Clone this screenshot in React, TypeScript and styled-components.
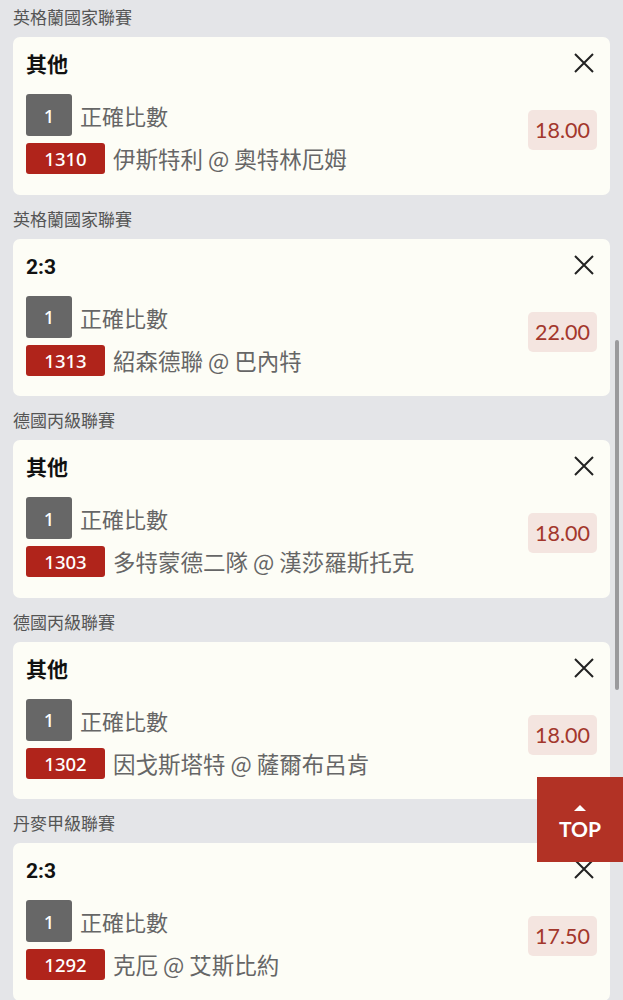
import React from "react";
import styled, { createGlobalStyle } from "styled-components";

const Global = createGlobalStyle`
  html, body { margin: 0; padding: 0; background: #e4e5e8; }
  body { font-family: "Noto Sans CJK TC", "Noto Sans", sans-serif; overflow: hidden; }
`;

const Page = styled.div`
  height: 1000px;
  overflow: hidden;
  position: relative;
  padding: 0 13px;
  box-sizing: border-box;
`;

const Section = styled.section`
  display: flex;
  flex-direction: column;
`;

const League = styled.div<{ $first?: boolean }>`
  padding-top: ${(p) => (p.$first ? 5 : 12)}px;
  margin-bottom: 8px;
  height: 24px;
  line-height: 24px;
  font-size: 17px;
  color: #555;
`;

const Card = styled.div`
  background: #fdfdf6;
  border-radius: 7px;
  display: flex;
  justify-content: space-between;
  padding: 14px 13px 20.5px 13px;
`;

const Left = styled.div`
  display: flex;
  flex-direction: column;
`;

const Title = styled.div`
  height: 28px;
  line-height: 28px;
  font-size: 21px;
  font-weight: 700;
  color: #111;
  margin-bottom: 15px;
  font-family: Roboto, "Noto Sans CJK TC", sans-serif;
`;

const Row = styled.div<{ $gap?: number }>`
  display: flex;
  align-items: center;
  gap: 8px;
  margin-top: ${(p) => p.$gap ?? 0}px;
`;

const Badge = styled.div<{ $variant: "grey" | "red" }>`
  display: flex;
  align-items: center;
  justify-content: center;
  color: #fff;
  border-radius: 3px;
  font-family: "Noto Sans", Roboto, sans-serif;
  background: ${(p) => (p.$variant === "grey" ? "#676767" : "#b0241b")};
  width: ${(p) => (p.$variant === "grey" ? 46 : 79)}px;
  height: ${(p) => (p.$variant === "grey" ? 42 : 31)}px;
  font-size: 18.5px;
  font-weight: 500;
`;

const Market = styled.span`
  font-size: 22px;
  color: #666;
  line-height: 1;
`;

const Match = styled.span`
  font-size: 22.5px;
  color: #666;
  line-height: 1;
`;

const Right = styled.div`
  display: flex;
  flex-direction: column;
  align-items: flex-end;
`;

const Close = styled.button`
  border: none;
  background: none;
  padding: 0;
  width: 24px;
  height: 24px;
  margin-right: 1px;
  display: flex;
  align-items: center;
  justify-content: center;
  cursor: pointer;
`;

const Price = styled.div`
  margin-top: 35px;
  width: 69px;
  height: 40px;
  border-radius: 5px;
  background: #f4e5e0;
  color: #a3372c;
  font-family: Lato, "Open Sans", sans-serif;
  font-size: 21.5px;
  display: flex;
  align-items: center;
  justify-content: center;
`;

const Scrollbar = styled.div`
  position: absolute;
  right: 4px;
  top: 340px;
  width: 4px;
  height: 350px;
  border-radius: 2px;
  background: #9a9a9c;
`;

const TopButton = styled.button`
  position: absolute;
  right: 0;
  top: 777px;
  width: 86px;
  height: 85px;
  border: none;
  background: #b23225;
  color: #fff;
  display: flex;
  flex-direction: column;
  align-items: center;
  justify-content: center;
  padding: 6px 0 0 0;
  font-family: Lato, "Open Sans", sans-serif;
  font-weight: 700;
  font-size: 21px;
  line-height: 24px;
`;

const Arrow = styled.span`
  width: 0;
  height: 0;
  border-left: 6px solid transparent;
  border-right: 6px solid transparent;
  border-bottom: 6px solid #fff;
  margin-bottom: 6px;
`;

const CloseIcon = () => (
  <svg width="22" height="22" viewBox="0 0 22 22">
    <path d="M2 2 L20 20 M20 2 L2 20" stroke="#222" strokeWidth="2" fill="none" />
  </svg>
);

const bets = [
  { league: "英格蘭國家聯賽", title: "其他", no: "1310", match: "伊斯特利 @ 奧特林厄姆", odds: "18.00" },
  { league: "英格蘭國家聯賽", title: "2:3", no: "1313", match: "紹森德聯 @ 巴內特", odds: "22.00" },
  { league: "德國丙級聯賽", title: "其他", no: "1303", match: "多特蒙德二隊 @ 漢莎羅斯托克", odds: "18.00" },
  { league: "德國丙級聯賽", title: "其他", no: "1302", match: "因戈斯塔特 @ 薩爾布呂肯", odds: "18.00" },
  { league: "丹麥甲級聯賽", title: "2:3", no: "1292", match: "克厄 @ 艾斯比約", odds: "17.50" },
];

export default function App() {
  return (
    <>
      <Global />
      <Page>
        {bets.map((b, i) => (
          <Section key={i}>
            <League $first={i === 0}>{b.league}</League>
            <Card>
              <Left>
                <Title>{b.title}</Title>
                <Row>
                  <Badge $variant="grey">1</Badge>
                  <Market>正確比數</Market>
                </Row>
                <Row $gap={7}>
                  <Badge $variant="red">{b.no}</Badge>
                  <Match>{b.match}</Match>
                </Row>
              </Left>
              <Right>
                <Close aria-label="remove">
                  <CloseIcon />
                </Close>
                <Price>{b.odds}</Price>
              </Right>
            </Card>
          </Section>
        ))}
        <Scrollbar />
        <TopButton>
          <Arrow />
          TOP
        </TopButton>
      </Page>
    </>
  );
}
